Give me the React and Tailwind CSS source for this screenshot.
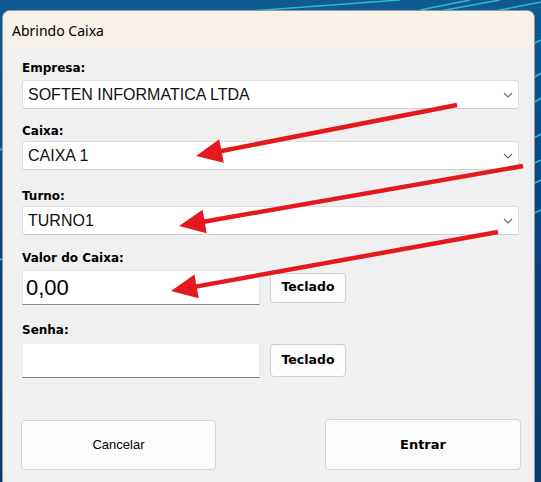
import React from 'react';

const label = "font-['DejaVu_Sans',sans-serif] font-bold text-[12px] leading-[14px] text-black";
const comboText = "font-['Liberation_Sans',Arial,sans-serif] text-[16px] text-[#111]";

const Chevron = () => (
  <svg width="10" height="6" viewBox="0 0 10 6" className="shrink-0">
    <path d="M1 1 L5 5 L9 1" fill="none" stroke="#6b6b6b" strokeWidth="1.2" />
  </svg>
);

const Combo = ({ value, className = '' }) => (
  <div
    className={`flex items-center justify-between h-[29px] bg-white border border-[#dcdcdc] border-b-[#cfcfcf] rounded-[3px] pl-[5px] pr-[5px] ${className}`}
  >
    <span className={comboText}>{value}</span>
    <Chevron />
  </div>
);

const Arrow = ({ x1, y1, x2, y2 }) => {
  const dx = x2 - x1;
  const dy = y2 - y1;
  const len = Math.sqrt(dx * dx + dy * dy);
  const ux = dx / len;
  const uy = dy / len;
  const head = 26;
  const half = 12;
  const bx = x2 - ux * head;
  const by = y2 - uy * head;
  const pts = `${x2},${y2} ${bx - uy * half},${by + ux * half} ${bx + uy * half},${by - ux * half}`;
  return (
    <g>
      <line x1={x1} y1={y1} x2={bx + ux * 4} y2={by + uy * 4} stroke="#e3191f" strokeWidth="4.5" />
      <polygon points={pts} fill="#e3191f" />
    </g>
  );
};

const App = () => {
  return (
    <div className="relative w-[541px] h-[482px] overflow-hidden bg-gradient-to-b from-[#0e5a92] via-[#0a437a] to-[#093a6b]">
      {/* wallpaper streaks */}
      <svg className="absolute inset-0" width="541" height="482">
        <g stroke="#37c9cf" strokeWidth="1.6" opacity="0.85">
          <line x1="250" y1="11" x2="400" y2="0" />
          <line x1="420" y1="10" x2="470" y2="0" />
          <line x1="440" y1="11" x2="500" y2="0" />
          <line x1="490" y1="12" x2="541" y2="2" />
          <line x1="530" y1="45" x2="541" y2="40" />
          <line x1="530" y1="80" x2="541" y2="73" />
          <line x1="530" y1="105" x2="541" y2="98" />
          <line x1="530" y1="140" x2="541" y2="134" />
          <line x1="530" y1="165" x2="541" y2="160" />
          <line x1="530" y1="185" x2="541" y2="180" />
          <line x1="530" y1="215" x2="541" y2="210" />
          <line x1="0" y1="150" x2="3" y2="148" />
          <line x1="0" y1="260" x2="3" y2="258" />
        </g>
      </svg>

      <div className="relative ml-[2px] mt-[10px] w-[533px] h-[480px] rounded-t-[8px] overflow-hidden border border-[#8f9aa5] border-b-0 bg-[#f0f0f0]">
        <div className="h-[39px] bg-[#f8f1e8] flex items-center pl-[9px]">
          <span className="font-['Noto_Sans',sans-serif] text-[14px] text-black">Abrindo Caixa</span>
        </div>

        <div className="pl-[19px] pr-[15px]">
          <div className={`${label} mt-[11px]`}>Empresa:</div>
          <Combo value="SOFTEN INFORMATICA LTDA" className="mt-[5px]" />

          <div className={`${label} mt-[15px]`}>Caixa:</div>
          <Combo value="CAIXA 1" className="mt-[3px] h-[28px]" />

          <div className={`${label} mt-[19px]`}>Turno:</div>
          <Combo value="TURNO1" className="mt-[3px] h-[28px]" />

          <div className={`${label} mt-[16px]`}>Valor do Caixa:</div>
          <div className="flex items-center gap-[10px] mt-[5px]">
            <div className="w-[238px] h-[35px] bg-white border border-[#e4e4e4] border-b-[#8a8a8a] flex items-center pl-[3px]">
              <span className="font-['Liberation_Sans',Arial,sans-serif] text-[22px] text-black">0,00</span>
            </div>
            <button className="w-[76px] h-[30px] bg-[#fdfdfd] border border-[#d0d0d0] rounded-[4px] font-['DejaVu_Sans',sans-serif] font-bold text-[12.5px] text-black">
              Teclado
            </button>
          </div>

          <div className={`${label} mt-[18px]`}>Senha:</div>
          <div className="flex items-center gap-[10px] mt-[6px]">
            <div className="w-[238px] h-[35px] bg-white border border-[#ececec] border-b-[#7a7a7a]" />
            <button className="w-[76px] h-[33px] bg-[#fdfdfd] border border-[#d0d0d0] rounded-[4px] font-['DejaVu_Sans',sans-serif] font-bold text-[12.5px] text-black">
              Teclado
            </button>
          </div>

          <div className="flex justify-between mt-[42px] -ml-[1px] -mr-[2px]">
            <button className="w-[195px] h-[50px] bg-[#fbfbfb] border border-[#d3d3d3] rounded-[4px] font-['Liberation_Sans',Arial,sans-serif] text-[13px] text-black">
              Cancelar
            </button>
            <button className="w-[196px] h-[51px] -mt-[1px] bg-[#fbfbfb] border border-[#d3d3d3] rounded-[4px] font-['DejaVu_Sans',sans-serif] font-bold text-[13px] text-black">
              Entrar
            </button>
          </div>
        </div>
      </div>

      {/* annotation arrows */}
      <svg className="absolute inset-0 pointer-events-none" width="541" height="482">
        <Arrow x1={457} y1={105} x2={196} y2={156} />
        <Arrow x1={523} y1={166} x2={179} y2={226} />
        <Arrow x1={498} y1={232} x2={171} y2={291} />
      </svg>
    </div>
  );
};

export default App;
